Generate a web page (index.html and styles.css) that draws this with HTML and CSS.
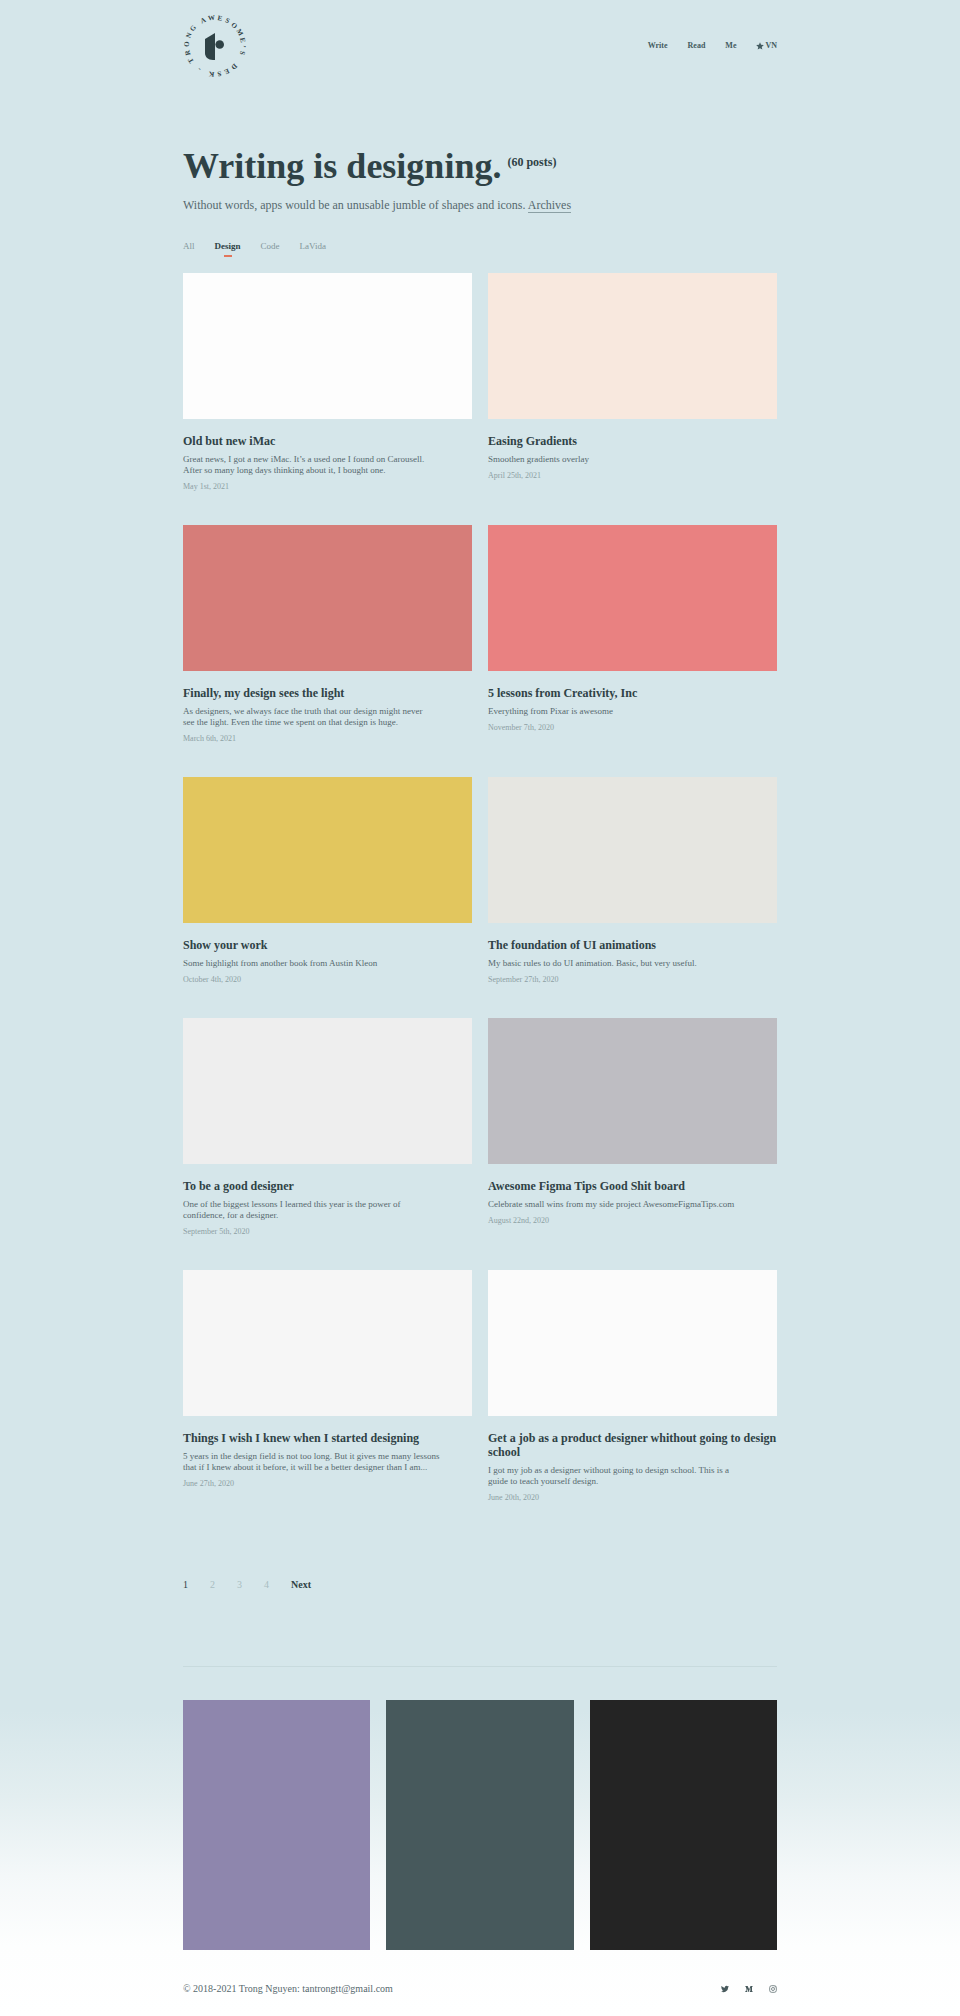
FILE: index.html
```html
<!DOCTYPE html>
<html lang="en">
<head>
<meta charset="utf-8">
<meta name="viewport" content="width=device-width, initial-scale=1">
<title>Writing is designing. – Trong Awesome's Desk</title>
<link rel="stylesheet" href="styles.css">
</head>
<body>
<div class="page">
  <header class="site-header">
    <a class="logo" href="#" aria-label="Trong Awesome's Desk">
      <svg viewBox="-32 -32 64 64" width="64" height="64">
        <g class="logo-ring">
          <text transform="rotate(-121)" y="-26">T</text>
          <text transform="rotate(-104)" y="-26">R</text>
          <text transform="rotate(-86)" y="-26">O</text>
          <text transform="rotate(-68)" y="-26">N</text>
          <text transform="rotate(-51)" y="-26">G</text>
          <text transform="rotate(-25)" y="-26">A</text>
          <text transform="rotate(-7)" y="-26">W</text>
          <text transform="rotate(10)" y="-26">E</text>
          <text transform="rotate(26)" y="-26">S</text>
          <text transform="rotate(43)" y="-26">O</text>
          <text transform="rotate(61)" y="-26">M</text>
          <text transform="rotate(78)" y="-26">E</text>
          <text transform="rotate(91)" y="-26">’</text>
          <text transform="rotate(104)" y="-26">S</text>
          <text transform="rotate(137)" y="-26">D</text>
          <text transform="rotate(155)" y="-26">E</text>
          <text transform="rotate(171)" y="-26">S</text>
          <text transform="rotate(187)" y="-26">K</text>
          <text transform="rotate(214)" y="-26">-</text>
        </g>
        <path d="M0 -13V14H-2C-7 14-10 11-10 7V-7Z"/>
        <circle cx="4.700" cy="-1.500" r="4.300"/>
      </svg>
    </a>
    <nav class="main-nav" aria-label="Main">
      <a href="#">Write</a>
      <a href="#">Read</a>
      <a href="#">Me</a>
      <a class="lang" href="#"><svg viewBox="0 0 24 24" width="8" height="8" aria-hidden="true"><path d="M12 1l3.200 7.600 8.300.700-6.300 5.400 1.900 8.100L12 18.500l-7.100 4.300 1.900-8.100L.5 9.300l8.300-.700z"/></svg>VN</a>
    </nav>
  </header>

  <main>
    <section class="intro">
      <h1>Writing is designing. <span class="count">(60 posts)</span></h1>
      <p>Without words, apps would be an unusable jumble of shapes and icons. <a href="#">Archives</a></p>
    </section>

    <nav class="tabs" aria-label="Categories">
      <a href="#">All</a>
      <a class="active" href="#" aria-current="page">Design</a>
      <a href="#">Code</a>
      <a href="#">LaVida</a>
    </nav>

    <section class="posts">
      <article class="post">
        <div class="thumb white"></div>
        <h2>Old but new iMac</h2>
        <p>Great news, I got a new iMac. It’s a used one I found on Carousell. <br>After so many long days thinking about it, I bought one.</p>
        <time>May 1st, 2021</time>
      </article>
      <article class="post">
        <div class="thumb peach"></div>
        <h2>Easing Gradients</h2>
        <p>Smoothen gradients overlay</p>
        <time>April 25th, 2021</time>
      </article>
      <article class="post">
        <div class="thumb brick"></div>
        <h2>Finally, my design sees the light</h2>
        <p>As designers, we always face the truth that our design might never <br>see the light. Even the time we spent on that design is huge.</p>
        <time>March 6th, 2021</time>
      </article>
      <article class="post">
        <div class="thumb coral"></div>
        <h2>5 lessons from Creativity, Inc</h2>
        <p>Everything from Pixar is awesome</p>
        <time>November 7th, 2020</time>
      </article>
      <article class="post">
        <div class="thumb yellow"></div>
        <h2>Show your work</h2>
        <p>Some highlight from another book from Austin Kleon</p>
        <time>October 4th, 2020</time>
      </article>
      <article class="post">
        <div class="thumb stone"></div>
        <h2>The foundation of UI animations</h2>
        <p>My basic rules to do UI animation. Basic, but very useful.</p>
        <time>September 27th, 2020</time>
      </article>
      <article class="post">
        <div class="thumb mist"></div>
        <h2>To be a good designer</h2>
        <p>One of the biggest lessons I learned this year is the power of <br>confidence, for a designer.</p>
        <time>September 5th, 2020</time>
      </article>
      <article class="post">
        <div class="thumb grey"></div>
        <h2>Awesome Figma Tips Good Shit board</h2>
        <p>Celebrate small wins from my side project AwesomeFigmaTips.com</p>
        <time>August 22nd, 2020</time>
      </article>
      <article class="post">
        <div class="thumb smoke"></div>
        <h2>Things I wish I knew when I started designing</h2>
        <p>5 years in the design field is not too long. But it gives me many lessons <br>that if I knew about it before, it will be a better designer than I am...</p>
        <time>June 27th, 2020</time>
      </article>
      <article class="post">
        <div class="thumb snow"></div>
        <h2>Get a job as a product designer whithout going to design school</h2>
        <p>I got my job as a designer without going to design school. This is a <br>guide to teach yourself design.</p>
        <time>June 20th, 2020</time>
      </article>
    </section>

    <nav class="pagination" aria-label="Pages">
      <a class="current" href="#" aria-current="page">1</a>
      <a href="#">2</a>
      <a href="#">3</a>
      <a href="#">4</a>
      <a class="next" href="#">Next</a>
    </nav>

    <section class="banners">
      <a class="banner violet" href="#" aria-label="Project one"></a>
      <a class="banner slate" href="#" aria-label="Project two"></a>
      <a class="banner black" href="#" aria-label="Project three"></a>
    </section>
  </main>

  <footer class="site-footer">
    <p>© 2018-2021 Trong Nguyen: tantrongtt@gmail.com</p>
    <div class="social">
      <a href="#" aria-label="Twitter"><svg viewBox="0 0 24 24" width="8" height="8"><path d="M24 4.600a10 10 0 0 1-2.800.800 5 5 0 0 0 2.100-2.700 10 10 0 0 1-3.100 1.200 4.900 4.900 0 0 0-8.400 4.500A14 14 0 0 1 1.700 3.200a4.900 4.900 0 0 0 1.500 6.500 5 5 0 0 1-2.200-.600v.1a4.900 4.900 0 0 0 3.900 4.800 5 5 0 0 1-2.200.1 4.900 4.900 0 0 0 4.600 3.400A10 10 0 0 1 0 19.500 14 14 0 0 0 21.500 7.100 10 10 0 0 0 24 4.600z"/></svg></a>
      <a href="#" aria-label="Medium"><svg viewBox="0 0 24 24" width="8" height="8"><path d="M1 3h7l4.500 10L16.500 3H23v1.500l-2 1.800v11.400l2 1.800V21h-9v-1.500l2-1.800V8l-5 13h-1L4.700 8.500v8.200L7.500 20v1H.5v-1L3 16.700V6.500L1 4.200z"/></svg></a>
      <a href="#" aria-label="Instagram"><svg class="outline" viewBox="0 0 24 24" width="8" height="8"><rect x="2" y="2" width="20" height="20" rx="6"/><circle cx="12" cy="12" r="4.500"/><circle cx="18" cy="6" r=".5"/></svg></a>
    </div>
  </footer>
</div>
</body>
</html>
```

FILE: styles.css
```css
* {
  box-sizing: border-box;
}

body {
  margin: 0;
  background: #d5e6ea;
  color: #2f4246;
  font-family: "Liberation Serif", "Times New Roman", serif;
}

h1, h2, p {
  margin: 0;
}

a {
  color: inherit;
  text-decoration: none;
}

svg {
  display: block;
  fill: currentColor;
}

.page {
  min-height: 100vh;
  padding: 14px 24px 20px;
  background: linear-gradient(to top, #fff 0, #fdfefe 70px, #f4f8f9 140px, #e3eef0 220px, #d5e6ea 305px);
}

.site-header,
main,
.site-footer {
  max-width: 594px;
  margin: 0 auto;
}

.site-header {
  display: flex;
  align-items: center;
  justify-content: space-between;
}

.logo-ring {
  font-size: 7px;
  font-weight: 700;
  text-anchor: middle;
}

.main-nav {
  display: flex;
  gap: 20px;
  color: #445c61;
  font-size: 8px;
  font-weight: 700;
  line-height: 12px;
}

.lang {
  display: flex;
  align-items: center;
  gap: 1px;
}

.intro {
  padding-top: 66px;
}

h1 {
  font-size: 36px;
  line-height: 44px;
}

.count {
  font-size: 12px;
  vertical-align: 12px;
  line-height: 12px;
  margin-left: -3px;
}

.intro p {
  margin-top: 9px;
  color: #56696e;
  font-size: 12px;
  line-height: 16px;
}

.intro p a {
  border-bottom: 1px solid #8ba0a4;
}

.tabs {
  display: flex;
  gap: 20px;
  margin-top: 27px;
  color: #82969a;
  font-size: 9px;
  line-height: 12px;
}

.tabs .active {
  color: #2f4246;
  font-weight: 700;
}

.tabs .active::after {
  content: "";
  display: block;
  width: 8px;
  height: 2px;
  margin: 3px auto 0;
  background: #e2765c;
}

.posts {
  display: grid;
  grid-template-columns: 1fr 1fr;
  gap: 33px 16px;
  margin-top: 16px;
}

.thumb {
  aspect-ratio: 289 / 146;
}

.white { background: #fdfdfd; }
.peach { background: #f8e8de; }
.brick { background: #d67d79; }
.coral { background: #e98181; }
.yellow { background: #e2c65e; }
.stone { background: #e6e6e1; }
.mist { background: #eeeeee; }
.grey { background: #bebdc2; }
.smoke { background: #f6f6f6; }
.snow { background: #fbfbfb; }

.post h2 {
  margin-top: 15px;
  font-size: 12px;
  line-height: 14px;
}

.post p {
  margin-top: 6px;
  color: #56696e;
  font-size: 9px;
  line-height: 11px;
}

.post time {
  display: block;
  margin-top: 6px;
  color: #8da0a4;
  font-size: 8px;
  line-height: 10px;
}

.pagination {
  display: flex;
  gap: 22px;
  margin-top: 75px;
  color: #a9bdc1;
  font-size: 10px;
  line-height: 14px;
}

.pagination .current {
  color: #2f4246;
}

.pagination .next {
  color: #2f4246;
  font-weight: 700;
}

.banners {
  display: grid;
  grid-template-columns: repeat(3, 1fr);
  gap: 16px;
  margin-top: 74px;
  padding-top: 33px;
  border-top: 1px solid #c8dadd;
}

.banner {
  aspect-ratio: 3 / 4;
}

.violet { background: #8e86ad; }
.slate { background: #47595c; }
.black { background: #242424; }

.site-footer {
  display: flex;
  align-items: center;
  justify-content: space-between;
  padding-top: 32px;
  color: #56696e;
  font-size: 10px;
  line-height: 14px;
}

.social {
  display: flex;
  gap: 16px;
  color: #47595c;
}

.outline {
  fill: none;
  stroke: currentColor;
  stroke-width: 2;
}
```
